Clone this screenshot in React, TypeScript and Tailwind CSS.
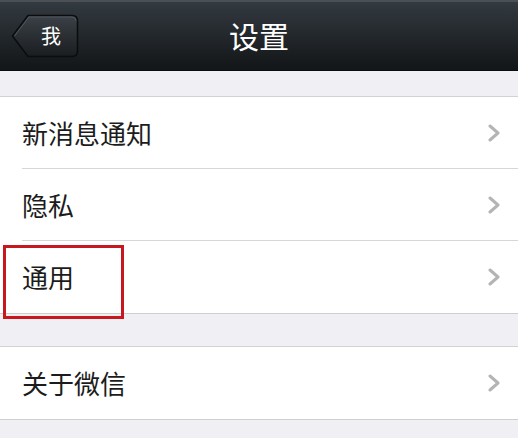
import React from "react";

const font = { fontFamily: '"Noto Sans CJK SC", "Noto Sans", sans-serif' };

const Chevron: React.FC = () => (
  <svg width="16" height="18" viewBox="0 0 16 18" className="mr-[16px]">
    <polyline
      points="4,2 12,9 4,16"
      fill="none"
      stroke="#b4b4b4"
      strokeWidth="3"
      strokeLinecap="round"
      strokeLinejoin="round"
    />
  </svg>
);

interface RowProps {
  label: string;
  last?: boolean;
}

const Row: React.FC<RowProps> = ({ label, last = false }) => (
  <div className={last ? "pl-[22px] border-b border-[#cfcfd2]" : "pl-[22px]"}>
    <div
      className={
        last
          ? "flex h-[72px] items-center justify-between"
          : "flex h-[72px] items-center justify-between border-b border-[#d6d6d8]"
      }
    >
      <span className="text-[26px] leading-none text-[#1c1c1c]">{label}</span>
      <Chevron />
    </div>
  </div>
);

const BackButton: React.FC = () => (
  <div className="relative w-[68px] h-[46px] ml-[11px]">
    <svg width="68" height="46" viewBox="0 0 68 46" className="absolute inset-0">
      <defs>
        <linearGradient id="bb" x1="0" y1="0" x2="0" y2="1">
          <stop offset="0" stopColor="#3b4147" />
          <stop offset="1" stopColor="#1a1d20" />
        </linearGradient>
      </defs>
      <path
        d="M1.5 23 L17 2.5 H61 Q66.5 2.5 66.5 8 V38 Q66.5 43.5 61 43.5 H17 Z"
        fill="url(#bb)"
        stroke="#0b0c0e"
        strokeWidth="1.5"
        strokeLinejoin="round"
      />
      <path
        d="M3.5 23 L18 4 H61 Q65 4 65 8"
        fill="none"
        stroke="#50575e"
        strokeWidth="1"
      />
    </svg>
    <span className="absolute inset-0 flex items-center justify-center pl-[12px] text-[20px] text-white leading-none">
      我
    </span>
  </div>
);

export default function App() {
  return (
    <div className="relative w-[518px] h-[438px] overflow-hidden bg-[#efeff4]" style={font}>
      <div className="flex h-[71px] items-center border-t-2 border-[#4a5055] border-b border-b-[#0c0d0e] bg-gradient-to-b from-[#333a40] to-[#131618]">
        <BackButton />
        <div className="flex-1 text-center text-[30px] font-normal leading-none text-white pr-[79px] -mt-[2px]">
          设置
        </div>
      </div>
      <div className="h-[26px] border-b border-[#d2d2d5]" />
      <div className="bg-white">
        <Row label="新消息通知" />
        <Row label="隐私" />
        <Row label="通用" last />
      </div>
      <div className="h-[33px] border-b border-[#d2d2d5]" />
      <div className="bg-white">
        <Row label="关于微信" last />
      </div>
      <div className="absolute left-[3px] top-[245px] w-[121px] h-[74px] border-[3px] border-[#c8181f]" />
    </div>
  );
}
